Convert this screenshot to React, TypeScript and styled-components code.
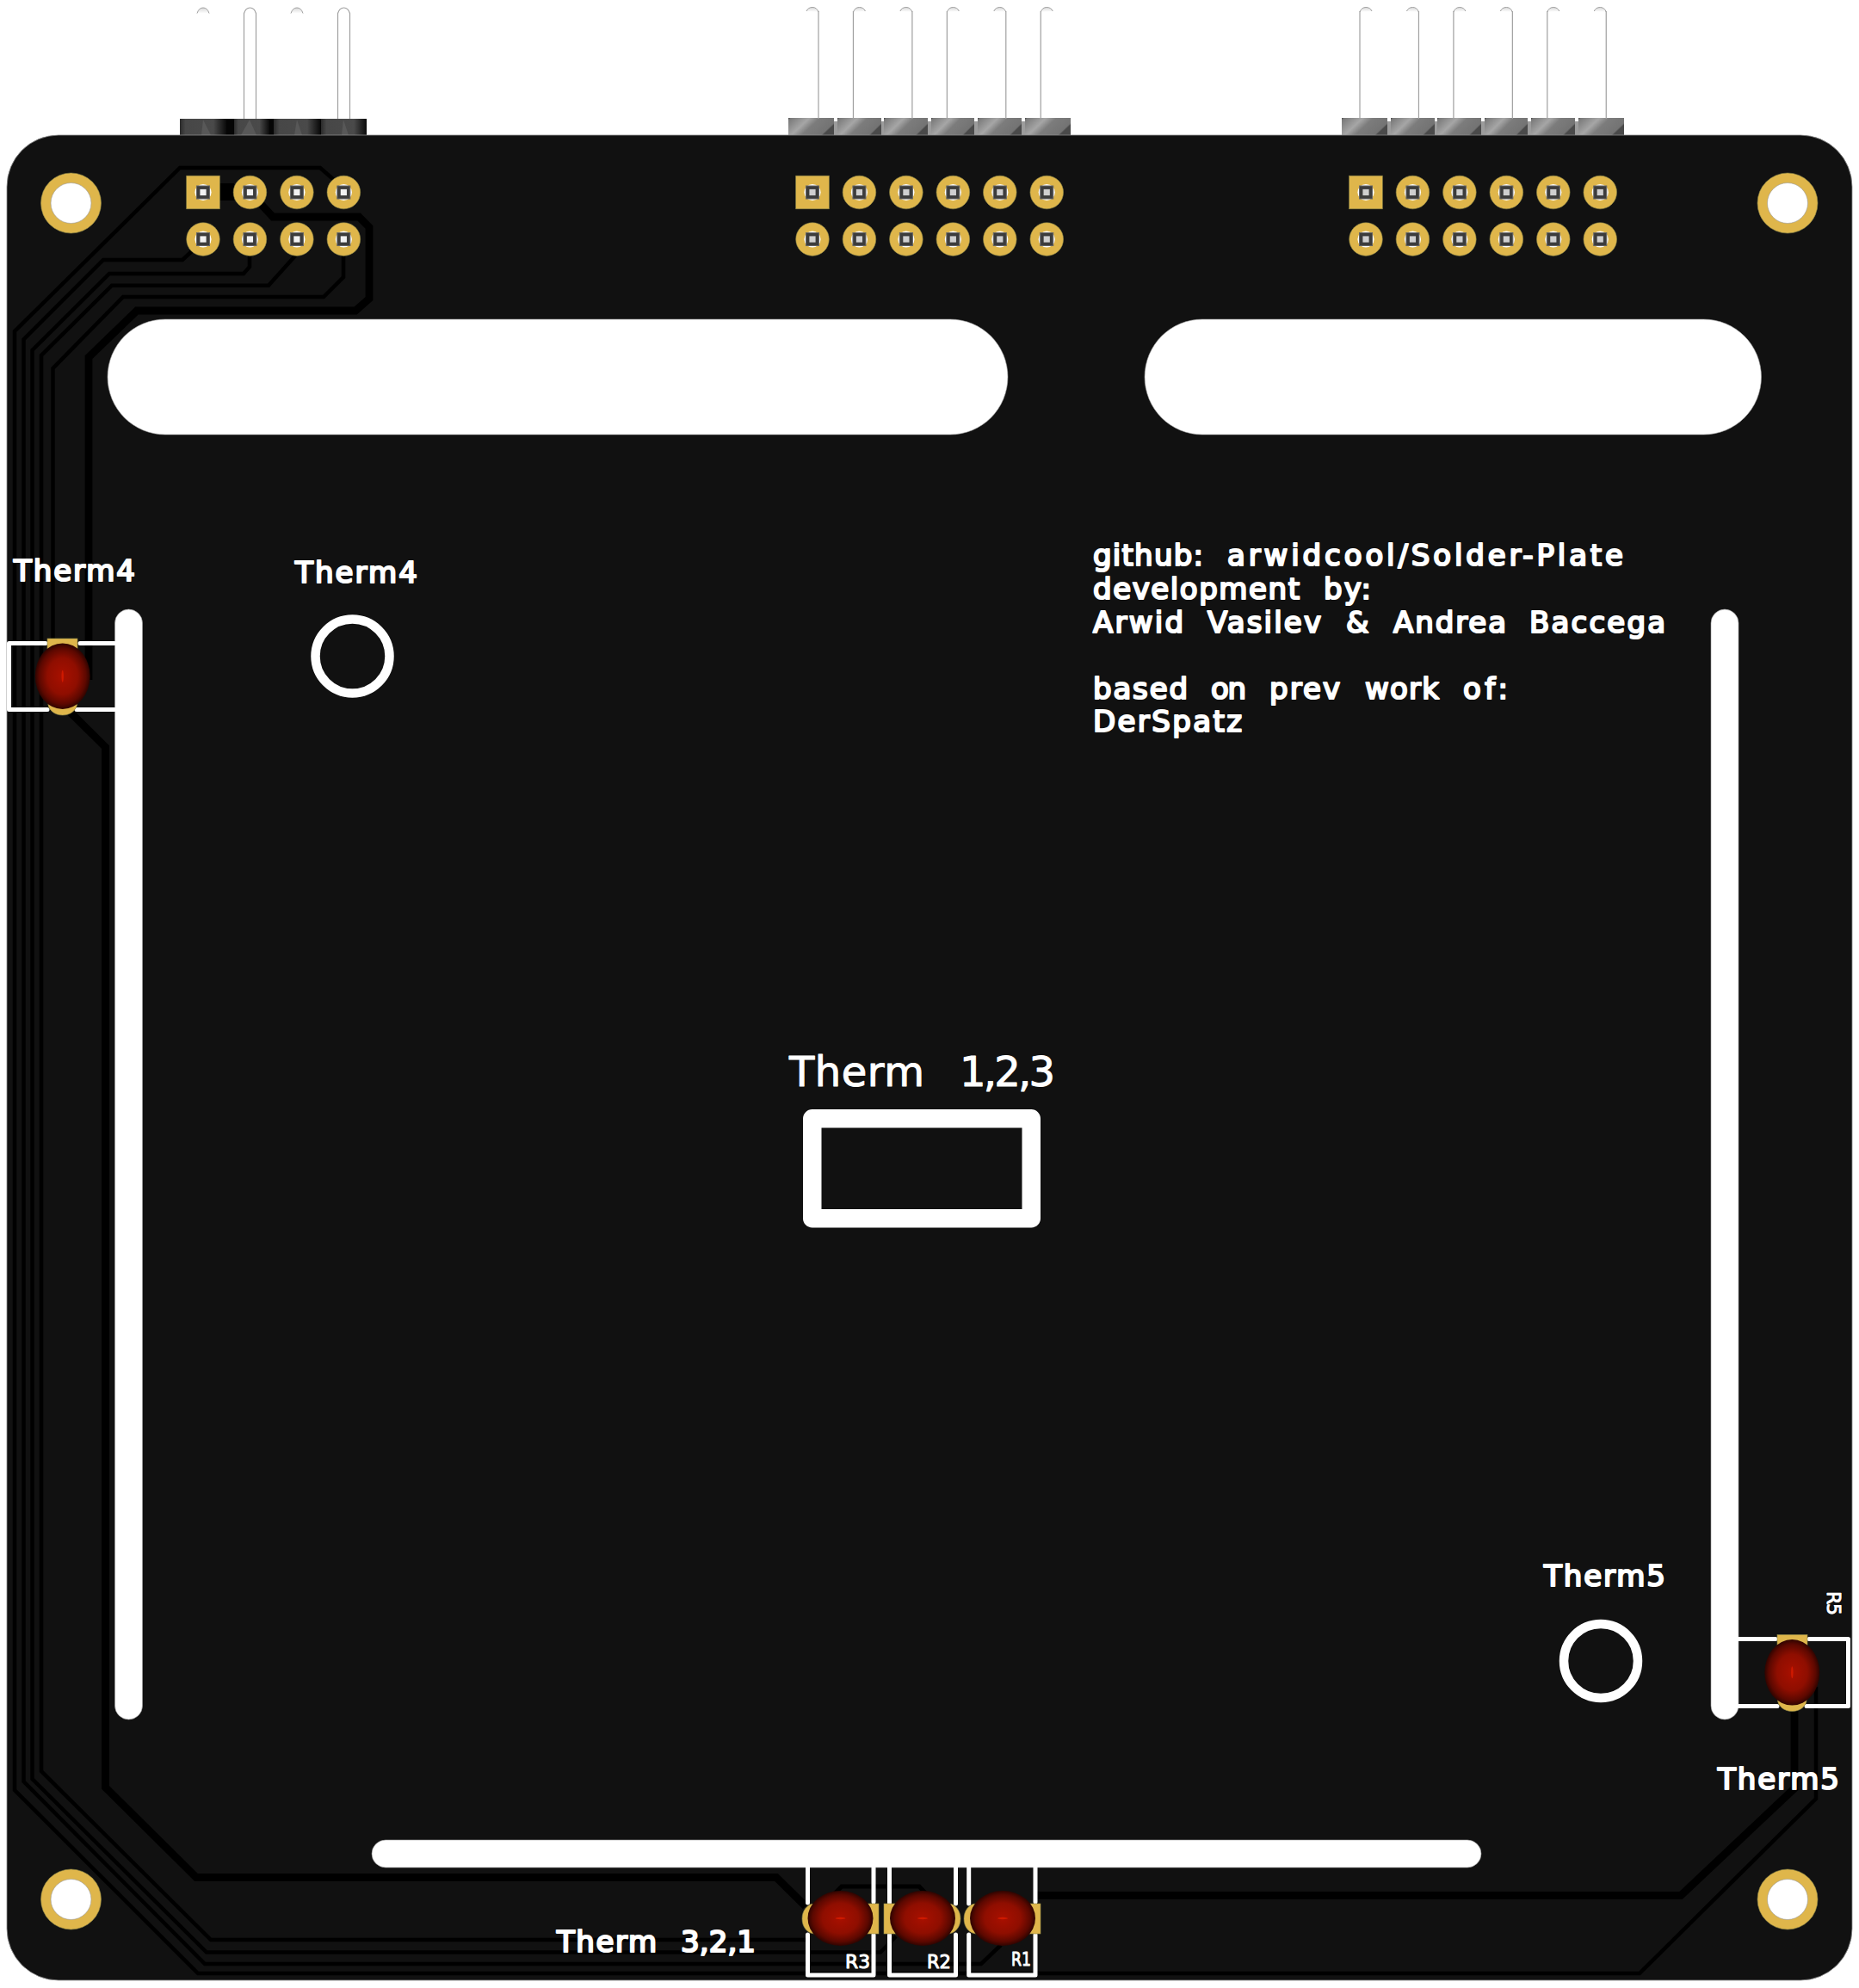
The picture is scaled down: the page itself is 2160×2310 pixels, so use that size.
import React from "react";
import styled, { createGlobalStyle } from "styled-components";

const Global = createGlobalStyle`
  html, body { margin: 0; padding: 0; background: #ffffff; }
  #root { width: 2160px; height: 2310px; }
`;

const Drawing = styled.svg`
  display: block;
  width: 2160px;
  height: 2310px;
  background: #ffffff;
`;

const Board = styled.rect`
  fill: #111111;
  stroke: #8a8a8a;
  stroke-width: 0.8;
`;

const Trace = styled.path<{ $w: number }>`
  fill: none;
  stroke: #000000;
  stroke-width: ${(p) => p.$w};
  stroke-linejoin: miter;
  stroke-linecap: butt;
`;

const Silk = styled.path<{ $w?: number }>`
  fill: none;
  stroke: #ffffff;
  stroke-width: ${(p) => p.$w ?? 5};
  stroke-linecap: round;
  stroke-linejoin: round;
`;

const Cutout = styled.rect`
  fill: #ffffff;
  stroke: #9a9a9a;
  stroke-width: 0.6;
`;

const Gold = styled.ellipse`
  fill: #dfb64b;
  stroke: #8f8a4a;
  stroke-width: 0.6;
`;

const GoldSquare = styled.rect`
  fill: #dfb64b;
  stroke: #8f8a4a;
  stroke-width: 0.6;
`;

const Drill = styled.circle`
  fill: #ffffff;
`;

const MountHole = styled.circle`
  fill: #ffffff;
  stroke: #999999;
  stroke-width: 0.6;
`;

const PinOuter = styled.rect`
  fill: #3c3c3c;
  stroke: #666666;
  stroke-width: 1;
`;

const PinInner = styled.rect<{ $tone: string }>`
  fill: ${(p) => p.$tone};
`;

const PinWire = styled.path`
  fill: none;
  stroke: #a0a0a0;
  stroke-width: 1.2;
`;

const PinCap = styled.path`
  fill: url(#capFill);
  stroke: #a0a0a0;
  stroke-width: 1;
`;

const Housing = styled.rect<{ $fill: string }>`
  fill: ${(p) => p.$fill};
`;

const Streak = styled.polygon`
  fill: #585858;
`;

const Dome = styled.ellipse`
  fill: url(#domeFill);
`;

const Glint = styled.ellipse`
  fill: #cf1a00;
`;

const Word = styled.text<{ $size: number; $bold: number }>`
  font-family: "DejaVu Sans", "Liberation Sans", sans-serif;
  font-size: ${(p) => p.$size}px;
  fill: #ffffff;
  stroke: #ffffff;
  stroke-width: ${(p) => p.$bold};
  stroke-linejoin: round;
  stroke-linecap: round;
  paint-order: stroke;
`;

const PITCH = 54.45;

function Pad({ x, y, square, tone }: { x: number; y: number; square?: boolean; tone: string }) {
  return (
    <g>
      {square ? (
        <GoldSquare x={x - 19.3} y={y - 19.3} width={38.6} height={38.6} />
      ) : (
        <Gold cx={x} cy={y} rx={19.3} ry={19.3} />
      )}
      <Drill cx={x} cy={y} r={9.6} />
      <PinOuter x={x - 7.5} y={y - 7.5} width={15} height={15} />
      <PinInner $tone={tone} x={x - 3.6} y={y - 3.6} width={7.2} height={7.2} />
    </g>
  );
}

function PadBlock({ x, count, tone }: { x: number; count: number; tone: string }) {
  const cols = Array.from({ length: count }, (_, i) => x + i * PITCH);
  return (
    <g>
      {cols.map((cx, i) => (
        <Pad key={`t${i}`} x={cx} y={223.5} square={i === 0} tone={tone} />
      ))}
      {cols.map((cx, i) => (
        <Pad key={`b${i}`} x={cx} y={278} tone={tone} />
      ))}
    </g>
  );
}

function Pin({ x, side }: { x: number; side: 1 | -1 }) {
  const wire = x + side * 7;
  const far = x - side * 7;
  return (
    <g>
      <PinCap d={`M${far} 13 Q${far + side * 2} 8.5 ${x} 8.5 Q${wire - side * 2} 8.5 ${wire} 14`} />
      <PinWire d={`M${wire} 13 L${wire} 138`} />
    </g>
  );
}

function WideHeader({ offset, firstSide }: { offset: number; firstSide: 1 | -1 }) {
  const segs: [number, number][] = [
    [916, 53],
    [973, 51],
    [1027, 51],
    [1082, 50],
    [1136, 51],
    [1191, 53],
  ];
  return (
    <g>
      <Housing $fill="#9c9c9c" x={916 + offset} y={141} width={328} height={16} />
      {segs.map(([x, w], i) => (
        <Housing key={i} $fill="url(#housingLight)" x={x + offset} y={137} width={w} height={20} />
      ))}
      {Array.from({ length: 6 }, (_, i) => (
        <Pin key={i} x={944 + offset + i * PITCH} side={(i % 2 === 0 ? firstSide : -firstSide) as 1 | -1} />
      ))}
    </g>
  );
}

function NarrowHeader() {
  const segs: [number, number][] = [
    [209, 54],
    [272, 41],
    [318, 54],
    [373, 53],
  ];
  return (
    <g>
      <Housing $fill="#050505" x={209} y={138} width={217} height={19} />
      {segs.map(([x, w], i) => (
        <Housing key={i} $fill="url(#housingDark)" x={x} y={138} width={w} height={19} />
      ))}
      <Streak points="236,139 234,157 245,157" />
      <Streak points="290,139 280,157 298,157" />
      <Streak points="345,139 342,157 351,157" />
      <Streak points="399,139 397,157 405,157" />
      <PinCap d="M229 15.5 Q231 9 236 9 Q241 9 243 15.5" />
      <PinCap d="M338 15.5 Q340 9 345 9 Q350 9 352 15.5" />
      <PinWire d="M283.5 138 L283.5 15.5 Q285.5 9 290.5 9 Q295.5 9 297.5 15.5 L297.5 138" />
      <PinWire d="M392.5 138 L392.5 15.5 Q394.5 9 399.5 9 Q404.5 9 406.5 15.5 L406.5 138" />
    </g>
  );
}

function DomeHead({ cx, cy, vertical }: { cx: number; cy: number; vertical: boolean }) {
  return (
    <g>
      <Dome cx={cx} cy={cy} rx={vertical ? 32 : 38} ry={vertical ? 38.3 : 32} />
      <Glint cx={cx} cy={cy} rx={vertical ? 1.2 : 6} ry={vertical ? 7 : 1.2} />
    </g>
  );
}

type Label = { t: string; x: number; x2: number; y: number };

const SMALL: Label[] = [
  { t: "github:", x: 1270, x2: 1398, y: 657 },
  { t: "arwidcool/Solder-Plate", x: 1426, x2: 1886, y: 657 },
  { t: "development", x: 1270, x2: 1510, y: 696 },
  { t: "by:", x: 1538, x2: 1593, y: 696 },
  { t: "Arwid", x: 1270, x2: 1375, y: 735 },
  { t: "Vasilev", x: 1403, x2: 1535, y: 735 },
  { t: "&", x: 1564, x2: 1591, y: 735 },
  { t: "Andrea", x: 1619, x2: 1750, y: 735 },
  { t: "Baccega", x: 1777, x2: 1935, y: 735 },
  { t: "based", x: 1270, x2: 1380, y: 812 },
  { t: "on", x: 1407, x2: 1448, y: 812 },
  { t: "prev", x: 1475, x2: 1557, y: 812 },
  { t: "work", x: 1586, x2: 1672, y: 812 },
  { t: "of:", x: 1700, x2: 1752, y: 812 },
  { t: "DerSpatz", x: 1270, x2: 1443, y: 850 },
  { t: "Therm4", x: 16, x2: 157, y: 675 },
  { t: "Therm4", x: 343, x2: 485, y: 677 },
  { t: "Therm5", x: 1794, x2: 1935, y: 1843 },
  { t: "Therm5", x: 1996, x2: 2137, y: 2079 },
  { t: "Therm", x: 647, x2: 763, y: 2268 },
  { t: "3,2,1", x: 791, x2: 878, y: 2268 },
];

const TINY: Label[] = [
  { t: "R3", x: 982, x2: 1011, y: 2287 },
  { t: "R2", x: 1077, x2: 1105, y: 2287 },
  { t: "R1", x: 1175, x2: 1198, y: 2284 },
];

export default function App() {
  return (
    <>
      <Global />
      <Drawing viewBox="0 0 2160 2310" xmlns="http://www.w3.org/2000/svg">
        <defs>
          <radialGradient id="domeFill" cx="50%" cy="50%" r="50%">
            <stop offset="0%" stopColor="#a81000" />
            <stop offset="55%" stopColor="#8f0e00" />
            <stop offset="85%" stopColor="#5c0800" />
            <stop offset="100%" stopColor="#2e0400" />
          </radialGradient>
          <linearGradient id="housingLight" x1="0" y1="0" x2="1" y2="0.4">
            <stop offset="0%" stopColor="#3f3f3f" />
            <stop offset="5%" stopColor="#7a7a7a" />
            <stop offset="40%" stopColor="#a6a6a6" />
            <stop offset="60%" stopColor="#7c7c7c" />
            <stop offset="96%" stopColor="#737373" />
            <stop offset="100%" stopColor="#4a4a4a" />
          </linearGradient>
          <linearGradient id="housingDark" x1="0" y1="0" x2="1" y2="0">
            <stop offset="0%" stopColor="#2a2a2a" />
            <stop offset="12%" stopColor="#474747" />
            <stop offset="72%" stopColor="#4a4a4a" />
            <stop offset="100%" stopColor="#0a0a0a" />
          </linearGradient>
          <linearGradient id="capFill" x1="0" y1="0" x2="0" y2="1">
            <stop offset="0%" stopColor="#d8d8d8" />
            <stop offset="100%" stopColor="#ffffff" />
          </linearGradient>
        </defs>

        <NarrowHeader />
        <WideHeader offset={0} firstSide={1} />
        <WideHeader offset={643} firstSide={-1} />

        <Board x={8} y={157} width={2144} height={2144} rx={60} ry={60} />

        <Trace $w={4.5} d="M396 216 L372 195 L209 195 L17 385 L17 2080 L230 2293 L1905 2293 L2110 2090 L2110 1960" />
        <Trace $w={4.5} d="M225 290 L212 302 L120 302 L27.5 394.5 L27.5 2070 L238 2282 L1140 2282 L1163 2260" />
        <Trace $w={4.5} d="M290 295 L290 310 L283 318 L127 318 L37.5 407 L37.5 2067 L240 2268.5 L1023 2268.5 L1041 2250" />
        <Trace $w={4.5} d="M345 295 L312 331.7 L130 331.7 L48 413 L48 2058 L245 2254 L940 2254" />
        <Trace $w={4.5} d="M399 295 L399 322 L376 345 L143 345 L61.5 428 L61.5 750" />
        <Trace $w={8.8} d="M290 223 L317 252 L417 252 L429 264 L429 347 L413 361 L159 361 L103 415 L103 790" />
        <Trace $w={8.8} d="M80 826 L122.5 868 L122.5 2077 L228 2181.5 L902 2181.5 L936 2215" />
        <Trace $w={20} d="M255 223 L272 223" />
        <Trace $w={8.8} d="M2085 1985 L2085 2078 L1953 2202.5 L1205 2202.5" />
        <Trace $w={5} d="M970 2200 L978 2192 L1068 2192 L1085 2210" />

        <Gold cx={82.5} cy={236} rx={35} ry={35} />
        <MountHole cx={82.5} cy={236} r={23.5} />
        <Gold cx={2077} cy={236} rx={35} ry={35} />
        <MountHole cx={2077} cy={236} r={23.5} />
        <Gold cx={82.5} cy={2207} rx={35} ry={35} />
        <MountHole cx={82.5} cy={2207} r={23.5} />
        <Gold cx={2077} cy={2207} rx={35} ry={35} />
        <MountHole cx={2077} cy={2207} r={23.5} />

        <PadBlock x={236} count={4} tone="#f2f2f2" />
        <PadBlock x={944} count={6} tone="#cfcfcf" />
        <PadBlock x={1587} count={6} tone="#cfcfcf" />

        <Cutout x={125} y={371} width={1046} height={134} rx={67} ry={67} />
        <Cutout x={1330} y={371} width={716.5} height={134} rx={67} ry={67} />
        <Cutout x={133.5} y={708} width={32} height={1290} rx={16} ry={16} />
        <Cutout x={1988} y={708} width={32} height={1290} rx={16} ry={16} />
        <Cutout x={432} y={2138} width={1289} height={32} rx={16} ry={16} />

        <Silk $w={10.5} d="M452.5 762.5 a43 43 0 1 0 -86 0 a43 43 0 1 0 86 0 Z" />
        <Silk $w={10.5} d="M1903 1930 a43 43 0 1 0 -86 0 a43 43 0 1 0 86 0 Z" />
        <Silk $w={21.5} d="M943.75 1299.75 H1198.25 V1415.75 H943.75 Z" />

        <Silk d="M133 747.5 H93 M53 747.5 H10.5 V824.5 H55 M89 824.5 H133" />
        <Silk d="M2020 1904.5 H2063 M2102 1904.5 H2147.5 V1982.5 H2099 M2065 1982.5 H2020" />
        <Silk d="M938.5 2170 V2211 M938.5 2248 V2295 H1015 V2248 M1015 2210 V2170" />
        <Silk d="M1033.5 2170 V2211 M1033.5 2248 V2295 H1110.5 V2248 M1110.5 2212 V2170" />
        <Silk d="M1125.7 2170 V2212 M1125.7 2248 V2295 H1203 V2248 M1203 2210 V2170" />

        <GoldSquare x={55} y={742} width={35} height={28} />
        <Gold cx={72.7} cy={817} rx={17} ry={14} />
        <GoldSquare x={2065} y={1899.5} width={35} height={28} />
        <Gold cx={2082.3} cy={1974.5} rx={17} ry={14} />
        <Gold cx={946} cy={2229.5} rx={14} ry={17.5} />
        <GoldSquare x={990} y={2212} width={31} height={35} />
        <GoldSquare x={1027} y={2212} width={30} height={35} />
        <Gold cx={1102} cy={2229.5} rx={14} ry={17.5} />
        <Gold cx={1134} cy={2229.5} rx={14} ry={17.5} />
        <GoldSquare x={1180} y={2212} width={29} height={35} />

        <DomeHead cx={72.7} cy={785.7} vertical />
        <DomeHead cx={2082.3} cy={1943.3} vertical />
        <DomeHead cx={976.5} cy={2229} vertical={false} />
        <DomeHead cx={1072} cy={2229} vertical={false} />
        <DomeHead cx={1165} cy={2229} vertical={false} />

        {SMALL.map((l, i) => (
          <Word key={i} $size={34} $bold={2.2} x={l.x} y={l.y} textLength={l.x2 - l.x} lengthAdjust="spacing">
            {l.t}
          </Word>
        ))}
        {TINY.map((l, i) => (
          <Word key={i} $size={22} $bold={1} x={l.x} y={l.y} textLength={l.x2 - l.x} lengthAdjust="spacingAndGlyphs">
            {l.t}
          </Word>
        ))}
        <Word $size={48} $bold={1} x={917} y={1262} textLength={157} lengthAdjust="spacing">
          Therm
        </Word>
        <Word $size={48} $bold={1} x={1115} y={1262} textLength={111} lengthAdjust="spacing">
          1,2,3
        </Word>
        <Word $size={22} $bold={1} x={2123} y={1849} textLength={28} lengthAdjust="spacing" transform="rotate(90 2123 1849)">
          R5
        </Word>
      </Drawing>
    </>
  );
}
